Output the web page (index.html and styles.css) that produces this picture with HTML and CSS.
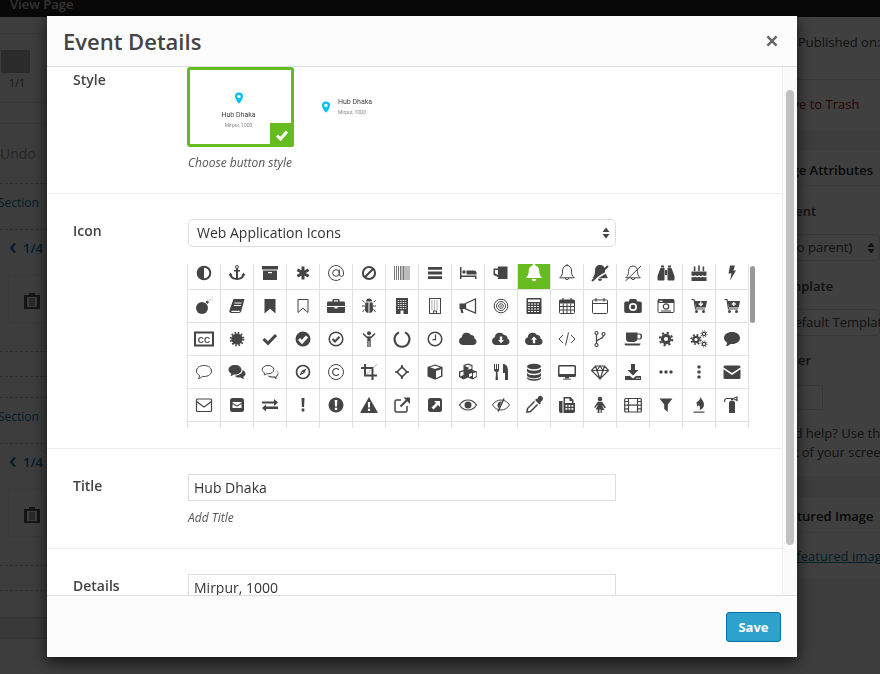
FILE: index.html
```html
<!DOCTYPE html>
<html lang="en">
<head>
<meta charset="utf-8">
<title>Event Details</title>
<link rel="stylesheet" href="styles.css">
</head>
<body>
<div class="page">
  <div class="topbar"><span class="view-page">View Page</span></div>
  <div class="columns">
    <div class="main">
      <div class="b r1"></div>
      <div class="b r2"><div class="thumb"></div><div class="thumb-count">1/1</div></div>
      <div class="b r3"></div>
      <div class="d r4"><span class="undo">Undo</span></div>
      <div class="d r5"><span class="section">Section</span></div>
      <div class="d r6">
        <div class="pager"><svg class="chev" viewBox="0 0 8 12"><path d="M6 1.5 2 6l4 4.500"/></svg><span>1/4</span></div>
        <div class="card"><svg class="clip" viewBox="0 0 16 16"><path d="M0 2h5V0h6v2h5v14H0zM3 4v10h10V4z"/><rect x="5" y="5" width="6" height="8" opacity=".5"/></svg></div>
      </div>
      <div class="d r7"></div>
      <div class="d r8"></div>
      <div class="d r5 r5b"><span class="section">Section</span></div>
      <div class="d r6">
        <div class="pager"><svg class="chev" viewBox="0 0 8 12"><path d="M6 1.500 2 6l4 4.500"/></svg><span>1/4</span></div>
        <div class="card"><svg class="clip" viewBox="0 0 16 16"><path d="M0 2h5V0h6v2h5v14H0zM3 4v10h10V4z"/><rect x="5" y="5" width="6" height="8" opacity=".5"/></svg></div>
      </div>
      <div class="d r7"></div>
      <div class="r9"></div>
      <div class="band"></div>
    </div>
    <div class="side">
      <div class="s-block s-pub"><span>Published on:</span></div>
      <div class="s-block s-trash"><span>Move to Trash</span></div>
      <div class="panel s-attr">
        <h3 class="panel-title">Page Attributes</h3>
        <div class="s-label">Parent</div>
        <div class="s-select s-select-a"><span>(no parent)</span><svg class="updown" viewBox="0 0 8 12"><path d="M4 .5 7.500 5h-7zM4 11.500.5 7h7z"/></svg></div>
        <div class="s-label s-label-t">Template</div>
        <div class="s-select s-select-b"><span>Default Template</span></div>
        <div class="s-label s-label-o">Order</div>
        <div class="s-order"></div>
        <p class="s-help">Need help? Use the Help tab in the upper<br>right of your screen.</p>
      </div>
      <div class="panel s-feat">
        <h3 class="panel-title">Featured Image</h3>
        <a class="s-link">Set featured image</a>
      </div>
    </div>
  </div>
</div>
<div class="overlay"></div>

<div class="modal">
  <header class="modal-head">
    <h2 class="modal-title">Event Details</h2>
    <svg class="close" viewBox="0 0 12 12"><path d="M2.300.6 6 4.300 9.700.6l1.700 1.700L7.700 6l3.700 3.700-1.700 1.700L6 7.700l-3.700 3.700L.6 9.700 4.300 6 .6 2.300z"/></svg>
  </header>
  <div class="modal-body">
    <div class="content">
      <section class="row row-style">
        <div class="label label-style">Style</div>
        <div class="field">
          <div class="styles">
            <div class="opt opt-a">
              <svg class="pin" viewBox="0 0 10 14"><path d="M5 0a5 5 0 0 0-5 5c0 3.500 5 9 5 9s5-5.500 5-9a5 5 0 0 0-5-5zm0 7.200A2.200 2.200 0 1 1 5 2.800a2.200 2.200 0 0 1 0 4.400z"/></svg>
              <div class="opt-title">Hub Dhaka</div>
              <div class="opt-sub">Mirpur, 1000</div>
              <div class="tick"><svg viewBox="0 0 14 14"><path class="white-line" d="M2 7.500 5.500 11 12 3.500"/></svg></div>
            </div>
            <div class="opt opt-b">
              <svg class="pin" viewBox="0 0 10 14"><path d="M5 0a5 5 0 0 0-5 5c0 3.500 5 9 5 9s5-5.500 5-9a5 5 0 0 0-5-5zm0 7.200A2.200 2.200 0 1 1 5 2.800a2.200 2.200 0 0 1 0 4.400z"/></svg>
              <div><div class="opt-title">Hub Dhaka</div><div class="opt-sub">Mirpur, 1000</div></div>
            </div>
          </div>
          <div class="hint hint-style">Choose button style</div>
        </div>
      </section>

      <section class="row row-icon">
        <div class="label">Icon</div>
        <div class="field">
          <div class="select"><span>Web Application Icons</span><svg class="updown" viewBox="0 0 8 12"><path d="M4 .5 7.500 5h-7zM4 11.500.5 7h7z"/></svg></div>
          <div class="picker">
            <div class="icons">
              <!-- row 1 -->
              <div class="c"><svg class="i" viewBox="0 0 20 20"><circle class="s s2" cx="10" cy="10" r="6.300"/><path d="M10 4a6 6 0 0 0 0 12z"/></svg></div>
              <div class="c"><svg class="i" viewBox="0 0 20 20"><circle class="s s1" cx="10" cy="4" r="1.500"/><path d="M9 5h2v11H9zM7 7h6v1.500H7z"/><path class="s s2" d="M3.500 11c.3 3.300 3 5 6.500 5s6.200-1.700 6.500-5"/><path d="M1.500 12.500 3.500 9.500l2 3zM14.500 12.500l2-3 2 3z"/></svg></div>
              <div class="c"><svg class="i" viewBox="0 0 20 20"><path d="M2 3h16v3.500H2zM3 7.500h14V17H3zM8 9v1.300h4V9z" fill-rule="evenodd"/></svg></div>
              <div class="c"><svg class="i" viewBox="0 0 20 20"><path class="s s3" d="M10 3.500v13M4.400 6.800l11.200 6.400M15.600 6.800 4.400 13.200"/></svg></div>
              <div class="c"><svg class="i" viewBox="0 0 20 20"><path class="s s1" d="M13.300 6.300v5a2.100 2.100 0 0 0 4.200 0V10a7.500 7.500 0 1 0-3 6"/><circle class="s s1" cx="10" cy="10" r="3.300"/></svg></div>
              <div class="c"><svg class="i" viewBox="0 0 20 20"><circle class="s s2" cx="10" cy="10" r="6.100"/><path class="s s2" d="M5.800 14.200 14.200 5.800"/></svg></div>
              <div class="c"><svg class="i" viewBox="0 0 20 20"><path class="s s1g" d="M2.500 3v14M4.500 3v14M6.500 3v14M8.500 3v14M10 3v14M11.500 3v14M13 3v14M15 3v14M17 3v14"/></svg></div>
              <div class="c"><svg class="i" viewBox="0 0 20 20"><path d="M3 4h14v2.800H3zM3 8.600h14v2.800H3zM3 13.200h14V16H3z"/></svg></div>
              <div class="c"><svg class="i" viewBox="0 0 20 20"><path d="M2 4h1.500v8.500h15V16H17v-2H3.500v2H2z"/><circle cx="6" cy="9" r="1.700"/><path d="M8.500 7.500H16a2.500 2.500 0 0 1 2.500 2.500v1.500h-10z"/></svg></div>
              <div class="c"><svg class="i" viewBox="0 0 20 20"><path d="M7 3.500h9.500V16H7zM2.500 5.500H7v1.500H4v3.500l3 1.500V14l-4.500-2z"/></svg></div>
              <div class="c on"><svg class="i" viewBox="0 0 20 20"><path d="M10 1a1.400 1.400 0 0 1 1.400 1.500C14 3.200 15.300 5.300 15.300 8c0 3.500.8 5 3 7H1.700c2.200-2 3-3.500 3-7 0-2.700 1.300-4.800 3.900-5.500A1.400 1.400 0 0 1 10 1zM7.800 16h4.400a2.200 2.200 0 0 1-4.400 0z"/></svg></div>
              <div class="c"><svg class="i" viewBox="0 0 20 20"><path class="s s1" d="M10 2.500c3 0 4.500 2.300 4.500 5.500 0 3.500.7 5 2.800 6.800H2.700C4.800 13 5.500 11.500 5.500 8c0-3.200 1.500-5.500 4.500-5.500zM8.200 14.800a1.800 1.800 0 0 0 3.600 0M10 1v1.500"/></svg></div>
              <div class="c"><svg class="i" viewBox="0 0 20 20"><path d="M10 2c3 0 5 2 5 5.500 0 .7 0 1.300.1 1.800L5 15H2.500c1.800-2 2.500-3.500 2.500-7.500C5 4 7 2 10 2zM8 15.500l8-5c.3 1.800 1 3.200 2 4.500zM8 16h4a2 2 0 0 1-4 0z"/><path class="s s2" d="M2 18 18 3"/></svg></div>
              <div class="c"><svg class="i" viewBox="0 0 20 20"><path class="s s1" d="M10 3c3 0 4.500 2.200 4.500 5.500 0 3 .8 4.500 2.800 6.300H2.700C4.700 13 5.500 11.500 5.500 8.500 5.500 5.200 7 3 10 3zM8.200 14.800a1.800 1.800 0 0 0 3.600 0M2.500 18 18 3"/></svg></div>
              <div class="c"><svg class="i" viewBox="0 0 20 20"><path d="M5 2.500h3v2H5zM12 2.500h3v2h-3zM4.500 5H8.500v11.500a1 1 0 0 1-1 1H2.500a1 1 0 0 1-1-1V13zM11.500 5h4L18.500 13v3.500a1 1 0 0 1-1 1h-5a1 1 0 0 1-1-1zM9 7h2v5H9z"/></svg></div>
              <div class="c"><svg class="i" viewBox="0 0 20 20"><path d="M4.800 3.500h1.600V8H4.800zM9.200 2.500h1.600V8H9.200zM13.600 3.500h1.600V8h-1.600zM2.500 8.500h15v3.800c-1.500 1-2.500 1-3.700 0-1.300 1-2.500 1-3.800 0-1.300 1-2.500 1-3.800 0-1.200 1-2.200 1-3.700 0zM2.500 13.700c1.500.8 2.700.8 3.700 0 1.300.8 2.500.8 3.800 0 1.300.8 2.500.8 3.800 0 1 .8 2.200.8 3.700 0V18h-15z"/></svg></div>
              <div class="c"><svg class="i" viewBox="0 0 20 20"><path d="M8 2.500H13L11.300 7.500H14L8 17.500 9.500 10.500H6.500z"/></svg></div>

              <!-- row 2 -->
              <div class="c"><svg class="i" viewBox="0 0 20 20"><circle cx="8" cy="12" r="6"/><path d="m11.500 6 1.800-1.600 1.800 1.800-1.600 1.800z"/><path class="s sh" d="M14.800 5c.4-1.300 1-1.800 1.800-1.500M17.500 2l.7-.7M18 4h1"/></svg></div>
              <div class="c"><svg class="i" viewBox="0 0 20 20"><path d="M6.500 3H17.500l-3.300 12.300A2.500 2.500 0 0 1 12 17H4.300C2.800 17 2 16 2.400 14.600zM7.500 6.500v1h7v-1zM7 9v1h7V9zM4.500 14.800c-.3.800 0 1.200.6 1.200h7.500c.3-.4.300-.8.100-1.200z" fill-rule="evenodd"/></svg></div>
              <div class="c"><svg class="i" viewBox="0 0 20 20"><path d="M4.500 3h11v14.500L10 12.800l-5.500 4.700z"/></svg></div>
              <div class="c"><svg class="i" viewBox="0 0 20 20"><path class="s s1" d="M5 3.500h10v13l-5-4.300-5 4.300z"/></svg></div>
              <div class="c"><svg class="i" viewBox="0 0 20 20"><path d="M6.500 5.500V4a1 1 0 0 1 1-1h5a1 1 0 0 1 1 1v1.500H18a1 1 0 0 1 1 1V10H1V6.500a1 1 0 0 1 1-1zM8 4.300v1.200h4V4.300zM1 11h7.500v1.500h3V11H19v5a1 1 0 0 1-1 1H2a1 1 0 0 1-1-1z" fill-rule="evenodd"/></svg></div>
              <div class="c"><svg class="i" viewBox="0 0 20 20"><path d="M7 5.500a3 3 0 0 1 6 0zM6.300 6.500h3.200V17c-2 0-3.500-1.300-3.500-3.500zM10.500 6.500h3.200L14 13.500c0 2.200-1.500 3.500-3.500 3.500z"/><path class="s s1" d="M5.500 6 3.300 4.500M3 10h3M5.500 13.500 3.500 16M14.500 6l2.200-1.500M17 10h-3M14.500 13.500l2 2.500"/></svg></div>
              <div class="c"><svg class="i" viewBox="0 0 20 20"><rect x="4" y="2" width="12" height="16"/><path class="dash-w" d="M5.800 4.500h8.400M5.800 6.500h8.400M5.800 8.500h8.400M5.800 10.500h8.400M5.800 12.500h8.400"/><path class="white-fill" d="M8.500 14.500h3V18h-3z"/></svg></div>
              <div class="c"><svg class="i" viewBox="0 0 20 20"><rect class="s s1" x="4.500" y="2.500" width="11" height="15"/><path class="dash-g" d="M6.300 5h7.400M6.300 7h7.400M6.300 9h7.400M6.300 11h7.400M6.300 13h7.400"/><rect class="s s1" x="8.500" y="15" width="3" height="2.500"/></svg></div>
              <div class="c"><svg class="i" viewBox="0 0 20 20"><path d="M1.500 7.500H7v5.500H4.500l1 4H3.300l-1-4h-.8z"/><path class="s s1h" d="M7.500 7.500 17.500 3v14L7.500 12.800z"/></svg></div>
              <div class="c"><svg class="i" viewBox="0 0 20 20"><circle class="s s1" cx="10" cy="10" r="6.800"/><circle class="s s1" cx="10" cy="10" r="4.500"/><circle class="s s1" cx="10" cy="10" r="2.300"/><circle cx="10" cy="10" r=".8"/></svg></div>
              <div class="c"><svg class="i" viewBox="0 0 20 20"><rect x="2.500" y="2" width="15" height="16" rx="1"/><path class="white-fill" d="M4 3.500h12V6H4z"/><path class="dash-w2" d="M4 8h12M4 10.500h12M4 13h12M4 15.500h12"/></svg></div>
              <div class="c"><svg class="i" viewBox="0 0 20 20"><rect class="s s1" x="2.500" y="4" width="15" height="13.500" rx="1"/><path d="M2.500 4h15v3.500h-15z"/><path class="s s1" d="M2.500 10.500h15M2.500 14h15M6.300 7.500v10M10 7.500v10M13.700 7.500v10"/><path class="s s12" d="M6 2v3M14 2v3"/></svg></div>
              <div class="c"><svg class="i" viewBox="0 0 20 20"><rect class="s s1" x="2.500" y="4" width="15" height="13.500" rx="1"/><path class="s s1" d="M2.500 7.500h15"/><path class="s s12" d="M6 2v3.500M14 2v3.500"/></svg></div>
              <div class="c"><svg class="i" viewBox="0 0 20 20"><path d="M7 3h6l1.300 2.500H17a1.800 1.800 0 0 1 1.800 1.800v8A1.800 1.800 0 0 1 17 17H3a1.800 1.800 0 0 1-1.800-1.700v-8A1.800 1.800 0 0 1 3 5.500h2.700zM10 7a4 4 0 1 0 0 8 4 4 0 0 0 0-8z" fill-rule="evenodd"/><circle cx="10" cy="11" r="2.300"/></svg></div>
              <div class="c"><svg class="i" viewBox="0 0 20 20"><rect class="s s1" x="2" y="3.500" width="16" height="13" rx="1"/><path d="M2 3.500h16V7H2zM3.500 3.500v0zM5 14.500h10v1H5z"/><path class="white-fill" d="M3.500 4.700h3v1.200h-3z"/><circle class="s s12" cx="10" cy="10.500" r="2.700"/></svg></div>
              <div class="c"><svg class="i" viewBox="0 0 20 20"><path class="s s12" d="M2.500 3.500H5L6.500 13h9.500"/><path d="M5.500 5H18l-1.300 6.500H7z"/><path class="white-line-t" d="M11.800 5.500v3.300M9.800 7.500l2 2 2-2"/><circle cx="7.500" cy="15.500" r="1.500"/><circle cx="14.500" cy="15.500" r="1.500"/></svg></div>
              <div class="c"><svg class="i" viewBox="0 0 20 20"><path class="s s12" d="M2.500 3.500H5L6.500 13h9.500"/><path d="M5.500 5H18l-1.300 6.500H7z"/><path class="white-line-t" d="M11.800 6v4M9.800 8h4"/><circle cx="7.500" cy="15.500" r="1.500"/><circle cx="14.500" cy="15.500" r="1.500"/></svg></div>

              <!-- row 3 -->
              <div class="c"><svg class="i" viewBox="0 0 20 20"><rect class="s s2" x="1" y="3.500" width="18" height="13"/><text class="cc" x="10" y="13.500" text-anchor="middle">CC</text></svg></div>
              <div class="c"><svg class="i" viewBox="0 0 20 20"><circle cx="10" cy="10" r="5.600"/><circle class="s teeth" cx="10" cy="10" r="6.300"/></svg></div>
              <div class="c"><svg class="i" viewBox="0 0 20 20"><path class="s s3" d="M3.500 10 8 14.300 16 6"/></svg></div>
              <div class="c"><svg class="i" viewBox="0 0 20 20"><circle cx="10" cy="10" r="7.500"/><path class="white-line" d="m6 10 3 3 5-5.500"/></svg></div>
              <div class="c"><svg class="i" viewBox="0 0 20 20"><circle class="s s15" cx="10" cy="10" r="6.800"/><path class="s s2" d="m6.500 10 2.500 2.500 4.500-4.700"/></svg></div>
              <div class="c"><svg class="i" viewBox="0 0 20 20"><circle cx="10" cy="4.200" r="2"/><path class="s s15" d="M4 4.500 7.800 8.300h4.400L16 4.500"/><path d="M8.300 7.800h3.400V18H10.400v-6h-.8v6H8.300z"/></svg></div>
              <div class="c"><svg class="i" viewBox="0 0 20 20"><path class="s s2" d="M7 3.300a7.500 7.500 0 1 0 6 0"/></svg></div>
              <div class="c"><svg class="i" viewBox="0 0 20 20"><circle class="s s15" cx="10" cy="10" r="6.800"/><path class="s s12" d="M10.500 5.500v5.200H7.500"/></svg></div>
              <div class="c"><svg class="i" viewBox="0 0 20 20"><path d="M5 16a4 4 0 0 1-1.200-7.800A5 5 0 0 1 13 6a3.500 3.500 0 0 1 3.500 3.500A3.400 3.400 0 0 1 15.500 16z"/></svg></div>
              <div class="c"><svg class="i" viewBox="0 0 20 20"><path d="M5 16a4 4 0 0 1-1.200-7.800A5 5 0 0 1 13 6a3.500 3.500 0 0 1 3.500 3.500A3.400 3.400 0 0 1 15.500 16z"/><path class="white-fill" d="M8.800 7.500h2.400v3.500H13l-3 3.300L7 11h1.800z"/></svg></div>
              <div class="c"><svg class="i" viewBox="0 0 20 20"><path d="M5 16a4 4 0 0 1-1.200-7.800A5 5 0 0 1 13 6a3.500 3.500 0 0 1 3.500 3.500A3.400 3.400 0 0 1 15.500 16z"/><path class="white-fill" d="M8.800 14.300h2.400v-3.500H13L10 7.500l-3 3.300h1.800z"/></svg></div>
              <div class="c"><svg class="i" viewBox="0 0 20 20"><path class="s s1" d="M6 6 2 10l4 4M14 6l4 4-4 4M11.500 3.500 8.500 16.500"/></svg></div>
              <div class="c"><svg class="i" viewBox="0 0 20 20"><circle class="s s12" cx="6.500" cy="4" r="1.500"/><circle class="s s12" cx="6.500" cy="16" r="1.500"/><circle class="s s12" cx="13.500" cy="5" r="1.500"/><path class="s s12" d="M6.500 5.500v9M13.500 6.500c0 4-7 3-7 6.500"/></svg></div>
              <div class="c"><svg class="i" viewBox="0 0 20 20"><path d="M3 3.500h11.500v1H17a2 2 0 0 1 2 2v1.500a2.500 2.500 0 0 1-2.500 2.500h-2A4 4 0 0 1 11 13H6.500A3.500 3.500 0 0 1 3 9.500zM14.500 5.500v4h1.800A1.200 1.200 0 0 0 17.500 8.300V6.700a1.200 1.200 0 0 0-1.200-1.200zM1.500 14.500h16c0 1.500-1 2-2 2h-12c-1 0-2-.5-2-2z" fill-rule="evenodd"/></svg></div>
              <div class="c"><svg class="i" viewBox="0 0 20 20"><circle cx="10" cy="10" r="5.200"/><circle class="s teeth2" cx="10" cy="10" r="6.200"/><circle class="white-fill" cx="10" cy="10" r="2.100"/></svg></div>
              <div class="c"><svg class="i" viewBox="0 0 20 20"><circle cx="7" cy="10.500" r="3.800"/><circle class="s teeth3" cx="7" cy="10.500" r="4.700"/><circle class="white-fill" cx="7" cy="10.500" r="1.600"/><circle class="s s12" cx="15" cy="5" r="1.700"/><circle class="s teeth4" cx="15" cy="5" r="3"/><circle class="s s12" cx="15" cy="15" r="1.700"/><circle class="s teeth4" cx="15" cy="15" r="3"/></svg></div>
              <div class="c"><svg class="i" viewBox="0 0 20 20"><path d="M10 3c4.700 0 8 2.600 8 6s-3.300 6-8 6l-1.500-.1C7.500 16 5.500 17 3.800 17c.8-.9 1.300-2 1.400-3.300C3.400 12.600 2 11 2 9c0-3.400 3.300-6 8-6z"/></svg></div>

              <!-- row 4 -->
              <div class="c"><svg class="i" viewBox="0 0 20 20"><path class="s s1" d="M10 3.500c4.400 0 7.500 2.400 7.500 5.500s-3.100 5.500-7.500 5.500l-1.500-.1C7.500 15.500 6 16.300 4.500 16.500c.6-.8 1-1.800 1-3C3.700 12.500 2.500 10.900 2.500 9c0-3.100 3.100-5.500 7.500-5.500z"/></svg></div>
              <div class="c"><svg class="i" viewBox="0 0 20 20"><path d="M8 3c3.700 0 6.500 2.100 6.500 4.800S11.700 12.600 8 12.600l-1.200-.1c-.9.900-2.100 1.500-3.300 1.600.5-.7.800-1.500.9-2.400C2.700 10.800 1.500 9.400 1.500 7.800 1.500 5.100 4.300 3 8 3zM15.500 8c1.800.7 3 2 3 3.600 0 1.300-.8 2.500-2.200 3.300 0 .7.300 1.400.7 2-1.300-.1-2.400-.6-3.200-1.400-2.500.4-4.800-.3-6-1.800 4.500 0 7.900-2.500 7.700-5.700z"/></svg></div>
              <div class="c"><svg class="i" viewBox="0 0 20 20"><path class="s s1" d="M8 3.500c3.300 0 5.800 1.800 5.800 4.200S11.300 11.800 8 11.800l-1.200-.1c-.8.700-1.600 1.100-2.500 1.200.3-.5.500-1.100.5-1.800C3.200 10.400 2.200 9.200 2.200 7.700 2.200 5.300 4.700 3.500 8 3.500z"/><path d="M15.500 8c1.800.7 3 2 3 3.600 0 1.300-.8 2.500-2.200 3.300 0 .7.300 1.400.7 2-1.300-.1-2.400-.6-3.200-1.400-2.500.4-4.800-.3-6-1.800h1.500c1.500.8 3.300 1 5 .6.500.4 1 .7 1.500.9-.1-.4-.1-.8-.1-1.300 1.300-.6 2.100-1.600 2.100-2.700 0-.8-.5-1.600-1.300-2.200z"/></svg></div>
              <div class="c"><svg class="i" viewBox="0 0 20 20"><circle class="s s17" cx="10" cy="10" r="6.500"/><path d="M13.500 6.500 11.300 11.300 6.500 13.500 8.700 8.700zM9.600 9.600l-.8 1.600 1.600-.8z" fill-rule="evenodd"/></svg></div>
              <div class="c"><svg class="i" viewBox="0 0 20 20"><circle class="s s1" cx="10" cy="10" r="7.500"/><path class="s s12" d="M13 8a3.500 3.500 0 1 0 0 4"/></svg></div>
              <div class="c"><svg class="i" viewBox="0 0 20 20"><path class="s s2" d="M6 2v11.500h12M2 6h11.500v12"/><path class="s sh" d="M6 13.500 18 2"/></svg></div>
              <div class="c"><svg class="i" viewBox="0 0 20 20"><path class="s s15" d="M10 5 15 10 10 15 5 10z"/><path class="s s17" d="M10 3v3.500M10 13.500V17M3 10h3.500M13.500 10H17"/></svg></div>
              <div class="c"><svg class="i" viewBox="0 0 20 20"><path d="M10 2.500 17.500 5v9.500L10 17.800 2.500 14.500V5zM11 9v7l5-2.200V7.200zM5 5.300 10 7l5-1.700L10 3.700z" fill-rule="evenodd"/></svg></div>
              <div class="c"><svg class="i" viewBox="0 0 20 20"><path d="M10 1.500 14.500 3v5L19 9.500v5.500L14.500 17.500 10 15.500 5.500 17.500 1 15V9.500L5.500 8V3zM10.500 4.800v3l3-1.200V3.800zM6.500 4l3.500 1.200L13.500 4 10 2.800zM5.500 9.300 2.300 10.500v4l3.200-1.500zM11 12v3l3-1.300V11zM15 11v5l3.300-1.700v-4z" fill-rule="evenodd"/></svg></div>
              <div class="c"><svg class="i" viewBox="0 0 20 20"><path d="M3 2h1v5h1V2h1v5h1V2h1v6c0 1-.6 1.700-1.500 2l.5 8H4.500L5 10C4 9.700 3 9 3 8zM12 2c3 0 5 2.500 5 7v9h-3v-7h-2z"/></svg></div>
              <div class="c"><svg class="i" viewBox="0 0 20 20"><ellipse cx="10" cy="4.500" rx="7" ry="2.800"/><path d="M3 6.500c1.200 1.500 3.700 2.200 7 2.200s5.800-.7 7-2.200V9c0 1.500-3 2.700-7 2.700S3 10.500 3 9zM3 11c1.200 1.500 3.700 2.200 7 2.200s5.800-.7 7-2.200v2.500c0 1.500-3 2.700-7 2.700S3 15 3 13.500z"/><path d="M3 15.300c1.200 1.300 3.700 2 7 2s5.800-.7 7-2v.7c0 1.500-3 2.700-7 2.700S3 17.500 3 16z"/></svg></div>
              <div class="c"><svg class="i" viewBox="0 0 20 20"><path d="M2.500 3h15A1.500 1.500 0 0 1 19 4.500v9a1.500 1.500 0 0 1-1.500 1.500H12v1.500h-4V15H2.500A1.500 1.500 0 0 1 1 13.500v-9A1.500 1.500 0 0 1 2.500 3zM2.500 4.500V12h15V4.500z" fill-rule="evenodd"/><path d="M6 16.500h8V18H6z" opacity=".6"/></svg></div>
              <div class="c"><svg class="i" viewBox="0 0 20 20"><path class="s s12" d="M5.500 4h9L18.500 8.500 10 17 1.500 8.500zM1.500 8.500h17M7 8.500 10 17l3-8.500M5.500 4 7 8.500 10 4l3 4.500L14.500 4"/></svg></div>
              <div class="c"><svg class="i" viewBox="0 0 20 20"><path d="M8 2h4v6h3.500L10 13.500 4.500 8H8zM2 14h5l3 2.500 3-2.500h5v4H2z"/><circle class="white-fill" cx="14" cy="16.300" r=".7"/><circle class="white-fill" cx="16" cy="16.300" r=".7"/></svg></div>
              <div class="c"><svg class="i" viewBox="0 0 20 20"><rect x="3.500" y="8.500" width="3" height="3" rx=".7"/><rect x="8.500" y="8.500" width="3" height="3" rx=".7"/><rect x="13.500" y="8.500" width="3" height="3" rx=".7"/></svg></div>
              <div class="c"><svg class="i" viewBox="0 0 20 20"><rect x="8.500" y="3.500" width="3" height="3" rx=".7"/><rect x="8.500" y="8.500" width="3" height="3" rx=".7"/><rect x="8.500" y="13.500" width="3" height="3" rx=".7"/></svg></div>
              <div class="c"><svg class="i" viewBox="0 0 20 20"><path d="M3 3.500h14A1.500 1.500 0 0 1 18.500 5v.5L10 11 1.500 5.500V5A1.500 1.500 0 0 1 3 3.500zM1.500 7.300 10 13l8.500-5.700v8.200A1.500 1.500 0 0 1 17 17H3a1.500 1.500 0 0 1-1.500-1.500z"/></svg></div>

              <!-- row 5 -->
              <div class="c"><svg class="i" viewBox="0 0 20 20"><rect class="s s12" x="2.500" y="4" width="15" height="12.500" rx="1"/><path class="s s12" d="m2.500 6.500 7.500 5.500 7.500-5.500"/></svg></div>
              <div class="c"><svg class="i" viewBox="0 0 20 20"><rect x="3" y="3" width="14" height="14" rx="2.500"/><path class="white-fill" d="M5.500 7h9v.8L10 10.500 5.500 7.800zM5.500 9l4.500 2.700L14.500 9v4h-9z"/></svg></div>
              <div class="c"><svg class="i" viewBox="0 0 20 20"><path d="M2 6.500h12V4l4 3.500L14 11V8.500H2zM18 11.500H6V9.500L2 13l4 3.500V14h12z"/></svg></div>
              <div class="c"><svg class="i" viewBox="0 0 20 20"><path d="M8.500 3h3l-.4 9H8.900zM8.700 13.500h2.600V16.500H8.700z"/></svg></div>
              <div class="c"><svg class="i" viewBox="0 0 20 20"><path d="M10 2.500a7.500 7.500 0 1 1 0 15 7.500 7.500 0 0 1 0-15zM8.700 5l.3 6.500h2L11.300 5zM8.800 12.700v2.300h2.400v-2.300z" fill-rule="evenodd"/></svg></div>
              <div class="c"><svg class="i" viewBox="0 0 20 20"><path d="M10 2 18.500 17a.7.7 0 0 1-.6 1H2.100a.7.700 0 0 1-.6-1zM8.800 7l.3 5.500h1.800L11.200 7zM8.900 13.700V16h2.200v-2.300z" fill-rule="evenodd"/></svg></div>
              <div class="c"><svg class="i" viewBox="0 0 20 20"><path class="s s15" d="M15 11v4.500a1.500 1.500 0 0 1-1.500 1.500h-9A1.500 1.500 0 0 1 3 15.500v-9A1.500 1.500 0 0 1 4.500 5H9"/><path class="s s2" d="m8.500 11.500 6.500-6.500"/><path d="M11.500 2.500H18v6.500z"/></svg></div>
              <div class="c"><svg class="i" viewBox="0 0 20 20"><rect x="3" y="3" width="14" height="14" rx="2.500"/><path class="white-fill" d="M9 6h6v6l-2-2-4.500 4.500L6.500 12.500 11 8z"/></svg></div>
              <div class="c"><svg class="i" viewBox="0 0 20 20"><path class="s s12" d="M1.500 10C3.500 6.800 6.500 5 10 5s6.500 1.800 8.500 5c-2 3.200-5 5-8.500 5s-6.500-1.800-8.500-5z"/><circle cx="10" cy="10" r="3.500"/></svg></div>
              <div class="c"><svg class="i" viewBox="0 0 20 20"><path class="s s1" d="M1.500 10C3.500 6.800 6.500 5 10 5s6.500 1.800 8.500 5c-2 3.200-5 5-8.500 5s-6.500-1.800-8.500-5z"/><path d="M10.500 6.500a4 4 0 0 0-4 3.800c0 1.200.5 2.200 1.300 3z"/><path class="s s15" d="M13 3.500 7 16.500"/></svg></div>
              <div class="c"><svg class="i" viewBox="0 0 20 20"><path d="M14.500 1.500a2.700 2.700 0 0 1 3.800 3.800l-2 2 .7.800-1.500 1.500-4.500-4.500 1.500-1.500.8.700z"/><path class="s s15" d="M10.500 6.500 3.500 13.500 3 17l3.500-.5 7-7"/></svg></div>
              <div class="c"><svg class="i" viewBox="0 0 20 20"><path d="M2 6h3.500v12H4a2 2 0 0 1-2-2zM6.500 2h7l3 3v3H18v8a2 2 0 0 1-2 2H6.500zM8 3.500v4.500h7V6h-2.500V3.500zM8.500 10v1.800h1.800V10zM11.500 10v1.800h1.800V10zM14.500 10v1.800h1.800V10zM8.500 13v1.800h1.800V13zM11.500 13v1.800h1.800V13zM14.500 13v1.800h1.800V13z" fill-rule="evenodd"/></svg></div>
              <div class="c"><svg class="i" viewBox="0 0 20 20"><circle cx="10" cy="4" r="2.300"/><path d="M7.800 6.700h4.400L16 12.500l-1.500.8-2-3v1.200l1.800 3.500h-2.500V18H10.600v-3.500H9.400V18H7.700v-3.500H5.700l1.800-3.500v-1.200l-2 3L4 12.500z"/></svg></div>
              <div class="c"><svg class="i" viewBox="0 0 20 20"><rect class="s s12" x="1.700" y="3.500" width="16.600" height="13.500" rx="1"/><path class="s s12" d="M5.500 3.500V17M14.500 3.500V17M5.500 10.200h9M1.700 6.500h3.800M1.700 10.200h3.800M1.700 13.800h3.800M14.500 6.500h3.800M14.500 10.200h3.800M14.500 13.800h3.800"/></svg></div>
              <div class="c"><svg class="i" viewBox="0 0 20 20"><path d="M3.500 3.500h13L11.800 9.500V17L8.200 14V9.500z"/></svg></div>
              <div class="c"><svg class="i" viewBox="0 0 20 20"><path d="M11.500 1.500c.5 3 3.500 4.500 3.500 8 0 2.700-1.800 4.800-4.500 5.500 1-2 .6-3.500-.8-5-.5 1-1 1.300-1.700 1.500.3-1.500-.5-3-.5-4.500.9 0 4-2 4-5.500z"/><path d="M4.500 16.500h11v1.200h-11z"/></svg></div>
              <div class="c"><svg class="i" viewBox="0 0 20 20"><path d="M10 5.500a3 3 0 0 1 3 3V18H7V8.500a3 3 0 0 1 3-3zM9 3h2v2H9z"/><path class="s s12" d="M4 3.500H11M11 3.500 15 2v3.500L11 3.500M4 3.500C3 4 2.500 5 2.500 7"/></svg></div>

              <!-- row 6, only cell borders show -->
              <div class="c"></div><div class="c"></div><div class="c"></div><div class="c"></div><div class="c"></div><div class="c"></div><div class="c"></div><div class="c"></div><div class="c"></div><div class="c"></div><div class="c"></div><div class="c"></div><div class="c"></div><div class="c"></div><div class="c"></div><div class="c"></div><div class="c"></div>
            </div>
            <div class="picker-thumb"></div>
          </div>
        </div>
      </section>

      <section class="row row-title">
        <div class="label">Title</div>
        <div class="field">
          <input class="input" type="text" value="Hub Dhaka">
          <div class="hint hint-title">Add Title</div>
        </div>
      </section>

      <section class="row row-details">
        <div class="label">Details</div>
        <div class="field">
          <input class="input" type="text" value="Mirpur, 1000">
        </div>
      </section>
    </div>
    <div class="track"><div class="track-thumb"></div></div>
  </div>
  <footer class="modal-foot"><button class="save" type="button">Save</button></footer>
</div>
</body>
</html>
```

FILE: styles.css
```css
* { box-sizing: border-box; }
html, body { margin: 0; height: 100%; overflow: hidden; }
body { font-family: "Open Sans", sans-serif; font-size: 14px; color: #444; background: #f1f1f1; }

/* page behind the dialog */
.page { height: 674px; overflow: hidden; display: flex; flex-direction: column; }
.topbar { height: 17px; flex: none; background: #222; overflow: hidden; padding-left: 10px; }
.view-page { display: block; margin-top: -5px; font-size: 13px; line-height: 18px; font-weight: 600; color: #ccc; }
.columns { display: flex; flex: 1; }
.main { width: 740px; flex: none; }
.side { flex: 1; overflow: hidden; white-space: nowrap; font-size: 13px; }

.b { border-bottom: 1px solid #ddd; }
.d { border-bottom: 1px dashed #bbb; }
.r1 { height: 17px; }
.r2 { height: 69px; padding: 16px 0 0 1px; }
.r3 { height: 21px; }
.r4 { height: 60px; padding-top: 20px; }
.r5 { height: 46px; padding-top: 10px; }
.r5b { padding-top: 10px; }
.r6 { height: 122px; padding: 8px 0 0 9px; }
.r7 { height: 25px; }
.r8 { height: 21px; }
.r9 { height: 26px; }
.thumb { width: 29px; height: 23px; background: #aaa; }
.thumb-count { width: 32px; text-align: center; font-size: 11px; line-height: 14px; margin-top: 3px; color: #666; }
.undo { font-size: 14px; line-height: 20px; color: #999; }
.section { font-size: 12px; line-height: 18px; color: #0074a2; margin-left: -2px; display: block; }
.pager { display: flex; align-items: center; gap: 6px; font-size: 13px; line-height: 20px; color: #0074a2; font-weight: 600; }
.chev { width: 8px; height: 12px; fill: none; stroke: #0074a2; stroke-width: 2; }
.card { width: 200px; height: 48px; margin: 17px 0 0 -1px; border: 1px solid #e5e5e5; background: #f4f4f4; padding: 17px 0 0 15px; }
.clip { display: block; width: 16px; height: 16px; fill: #555; }
.band { height: 22px; background: #e4e4e4; border-top: 1px solid #ccc; border-bottom: 1px solid #ccc; }

.s-block { background: #fff; padding-left: 58px; color: #444; }
.s-pub { height: 63px; padding-top: 15px; line-height: 20px; border-bottom: 1px solid #ddd; }
.s-trash { height: 50px; padding: 14px 0 0 33px; line-height: 20px; color: #a00; }
.panel { background: #fff; padding-left: 34px; }
.s-attr { margin-top: 21px; height: 325px; }
.s-feat { margin-top: 21px; height: 81px; }
.panel-title { margin: 0 0 0 -34px; padding: 9px 0 0 36px; height: 35px; border-bottom: 1px solid #eee; font-size: 13px; line-height: 20px; font-weight: 600; color: #222; }
.s-feat .panel-title { padding-left: 35px; height: 36px; }
.s-label { font-weight: 600; line-height: 20px; margin-top: 15px; color: #444; }
.s-label-t { margin-top: 15px; }
.s-label-o { margin-top: 14px; }
.s-select { margin: 13px 0 0 -14px; height: 27px; border: 1px solid #ddd; border-radius: 4px; line-height: 25px; display: flex; justify-content: space-between; align-items: center; padding: 0 4px 0 24px; }
.s-select-b { margin-top: 13px; padding-left: 24px; }
.s-select-a { width: 120px; }
.s-order { width: 60px; height: 25px; margin: 15px 0 0 -11px; border: 1px solid #ddd; }
.s-help { margin: 14px 0 0 -4px; line-height: 19px; }
.s-link { display: block; margin-top: 13px; line-height: 20px; color: #0074a2; text-decoration: underline; }
.updown { display: block; width: 8px; height: 12px; fill: #444; }

.overlay { position: fixed; inset: 0; background: rgba(0, 0, 0, .75); }

/* dialog */
.modal { position: fixed; left: 47px; top: 16px; width: 750px; height: 641px; background: #fff; display: flex; flex-direction: column; box-shadow: 0 5px 15px rgba(0, 0, 0, .7); }
.modal-head { flex: none; height: 51px; background: #fcfcfc; border-bottom: 1px solid #ddd; display: flex; align-items: center; justify-content: space-between; padding: 0 19px 0 16px; }
.modal-title { margin: 0; font-size: 22px; line-height: 50px; font-weight: 600; color: #444; }
.close { width: 12px; height: 12px; fill: #666; }
.modal-body { flex: 1; min-height: 0; display: flex; overflow: hidden; }
.content { width: 736px; flex: none; border-right: 1px solid #eee; }
.track { flex: 1; background: #fafafa; padding: 23px 3px 0 3px; }
.track-thumb { height: 455px; border-radius: 4px; background: #c1c1c1; }

.row { display: flex; padding-left: 26px; border-bottom: 1px solid #eee; }
.row-style { height: 127px; }
.row-icon { height: 255px; padding-top: 25px; }
.row-title { height: 100px; padding-top: 25px; }
.row-details { height: 100px; padding-top: 25px; border-bottom: 0; }
.label { width: 115px; flex: none; font-weight: 600; line-height: 24px; color: #444; }
.label-style { padding-top: 1px; }
.field { width: 570px; }

.styles { display: flex; margin-left: -1px; }
.opt { position: relative; width: 107px; height: 80px; color: #333; }
.opt-a { border: 3px solid #66bb1e; border-radius: 3px; display: flex; flex-direction: column; align-items: center; padding: 22px 4px 0 0; }
.opt-b { margin-left: 22px; display: flex; align-items: center; gap: 8px; padding: 0 0 0 6px; }
.pin { display: block; width: 8px; height: 12px; fill: #00c0f3; }
.opt-title { font-family: Roboto, sans-serif; font-size: 7px; line-height: 9px; color: #444; }
.opt-a .opt-title { margin-top: 7px; }
.opt-sub { font-family: Roboto, sans-serif; font-size: 5px; line-height: 7px; color: #888; margin-top: 2px; }
.opt-a .opt-sub { margin-top: 2px; }
.tick { position: absolute; right: -3px; bottom: -3px; width: 24px; height: 24px; background: #66bb1e; border-radius: 0 0 3px 0; display: flex; align-items: center; justify-content: center; }
.tick svg { width: 14px; height: 14px; }
.white-line { fill: none; stroke: #fff; stroke-width: 3; }
.hint { font-style: italic; font-size: 12px; line-height: 16px; color: #555; }
.hint-style { margin-top: 8px; }
.hint-title { margin-top: 9px; }

.select { width: 428px; height: 28px; border: 1px solid #ddd; border-radius: 5px; background: #fff; display: flex; align-items: center; justify-content: space-between; padding: 0 5px 2px 8px; color: #333; }
.select .updown { margin-top: 2px; }
.picker { position: relative; margin: 17px 0 0 -1px; height: 164px; overflow: hidden; }
.icons { display: grid; grid-template-columns: repeat(17, 33px); grid-auto-rows: 33px; margin-top: -7px; border-left: 1px solid #e2e2e2; width: 562px; }
.c { border-right: 1px solid #e2e2e2; border-bottom: 1px solid #e2e2e2; display: flex; align-items: center; justify-content: center; }
.c.on { background: #66bb1e; }
.c.on .i { fill: #fff; }
.picker-thumb { position: absolute; left: 563px; top: 2px; width: 5px; height: 57px; border-radius: 3px; background: #999; }
.i { display: block; width: 20px; height: 20px; fill: #444; flex: none; }
.s { fill: none; stroke: #444; }
.s1 { stroke-width: 1; }
.s1g { stroke-width: .8; stroke: #555; }
.s12 { stroke-width: 1.2; }
.s15 { stroke-width: 1.5; }
.s17 { stroke-width: 1.7; }
.s2 { stroke-width: 2; }
.s3 { stroke-width: 3; }
.sh { stroke-width: .6; stroke: #888; }
.s1h { fill: #fff; stroke-width: 1.3; }
.white-fill { fill: #fff; }
.white-line-t { fill: none; stroke: #fff; stroke-width: 1.3; }
.dash-w { fill: none; stroke: #fff; stroke-width: 1; stroke-dasharray: 1.4 1.1; }
.dash-w2 { fill: none; stroke: #fff; stroke-width: 1.2; stroke-dasharray: 2 1; }
.dash-g { fill: none; stroke: #777; stroke-width: 1; stroke-dasharray: 1.2 1.4; }
.teeth { stroke-width: 2; stroke-dasharray: 1.6 1.7; }
.teeth2 { stroke-width: 2; stroke-dasharray: 2.2 2.67; }
.teeth3 { stroke-width: 1.8; stroke-dasharray: 1.8 1.89; }
.teeth4 { stroke-width: 1; stroke-dasharray: 1.2 1.15; }
.cc { font-family: "Liberation Sans", sans-serif; font-size: 8.500px; font-weight: 700; fill: #444; }

.input { display: block; width: 428px; height: 27px; border: 1px solid #ddd; background: #fff; padding: 0 5px; font-family: "Open Sans", sans-serif; font-size: 14px; color: #333; outline: 0; border-radius: 0; }

.modal-foot { flex: none; height: 62px; background: #fcfcfc; border-top: 1px solid #ddd; display: flex; justify-content: flex-end; align-items: flex-start; padding: 16px 16px 0 0; }
.save { width: 55px; height: 30px; padding: 0; background: #2ea2cc; border: 1px solid #0074a2; border-radius: 3px; color: #fff; font-family: "Open Sans", sans-serif; font-size: 13px; font-weight: 700; }
```
